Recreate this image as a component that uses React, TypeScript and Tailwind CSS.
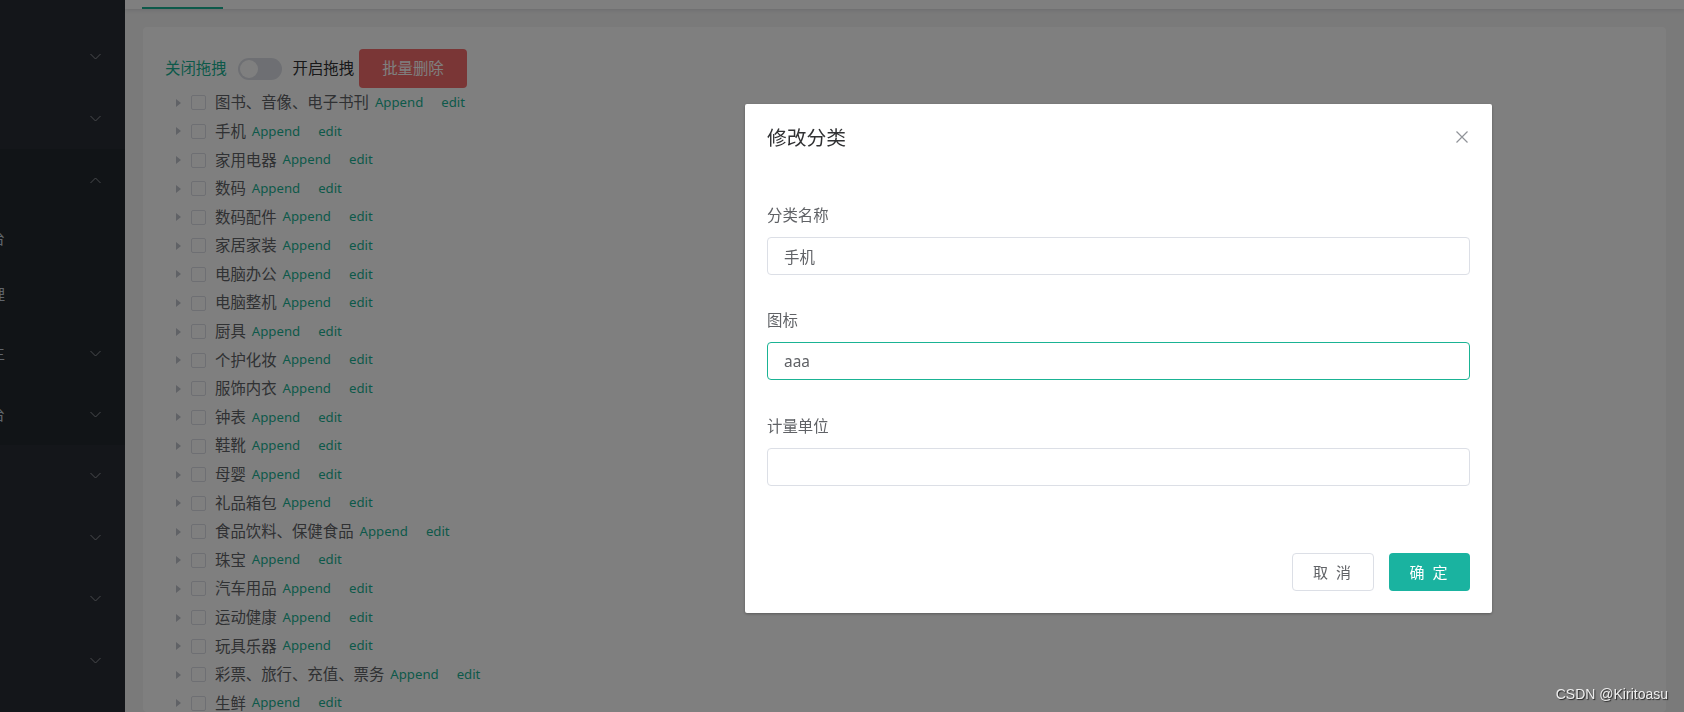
const categories = [
  '图书、音像、电子书刊',
  '手机',
  '家用电器',
  '数码',
  '数码配件',
  '家居家装',
  '电脑办公',
  '电脑整机',
  '厨具',
  '个护化妆',
  '服饰内衣',
  '钟表',
  '鞋靴',
  '母婴',
  '礼品箱包',
  '食品饮料、保健食品',
  '珠宝',
  '汽车用品',
  '运动健康',
  '玩具乐器',
  '彩票、旅行、充值、票务',
  '生鲜',
];

const Chevron = ({ up = false }: { up?: boolean }) => (
  <svg width="11" height="7" viewBox="0 0 11 7" className="shrink-0">
    <path
      d={up ? 'M0.5 6 L5.5 1 L10.5 6' : 'M0.5 1 L5.5 6 L10.5 1'}
      fill="none"
      stroke="#909399"
      strokeWidth="1"
    />
  </svg>
);

// only the tail of each title is visible, the sidebar is cut on the left
const SideRow = ({
  h,
  tail,
  chevron,
}: {
  h: string;
  tail?: string;
  chevron?: 'up' | 'down';
}) => (
  <div className={`${h} flex items-center`}>
    <div className="w-[5px] overflow-hidden flex justify-end whitespace-nowrap text-[15px] text-[#bfcbd9]">
      {tail ?? ''}
    </div>
    <div className="flex-1" />
    {chevron && (
      <div className="w-[11px] mr-[24px] flex">
        <Chevron up={chevron === 'up'} />
      </div>
    )}
  </div>
);

const TreeRow = ({ label }: { label: string }) => (
  <div className="h-[28.6px] flex items-center">
    <div className="w-[26px] flex justify-center">
      <svg width="5" height="8" viewBox="0 0 5 8">
        <path d="M0 0 L5 4 L0 8 Z" fill="#c0c4cc" />
      </svg>
    </div>
    <span className="w-[15px] h-[15px] border border-[#dcdfe6] rounded-[2px] bg-white mr-[9px] shrink-0" />
    <span className="text-[15.4px] text-[#606266]">{label}</span>
    <span className="ml-[6px] text-[13.2px] text-[#1ab394]">Append</span>
    <span className="ml-[18px] text-[13.2px] text-[#1ab394]">edit</span>
  </div>
);

const Field = ({
  label,
  value,
  focused = false,
  className = '',
}: {
  label: string;
  value: string;
  focused?: boolean;
  className?: string;
}) => (
  <div className={className}>
    <div className="h-[21px] leading-[21px] text-[15.4px] text-[#606266] mb-[11px]">
      {label}
    </div>
    <input
      readOnly
      value={value}
      className={`w-full h-[38px] rounded-[4px] border px-[16px] text-[15.4px] text-[#606266] outline-none bg-white ${
        focused ? 'border-[#1ab394]' : 'border-[#dcdfe6]'
      }`}
    />
  </div>
);

const App = () => {
  return (
    <div className="relative flex h-screen w-full overflow-hidden bg-[#f4f4f4] font-['Noto_Sans','Noto_Sans_CJK_SC',sans-serif]">
      <aside className="w-[125px] shrink-0 bg-[#282d34] flex flex-col">
        <div className="h-[25px]" />
        <SideRow h="h-[62px]" chevron="down" />
        <SideRow h="h-[62px]" chevron="down" />
        <div className="bg-[#22282f] flex flex-col">
          <SideRow h="h-[62px]" chevron="up" />
          <SideRow h="h-[55px]" tail="平台" />
          <SideRow h="h-[57px]" tail="管理" />
          <SideRow h="h-[60px]" tail="车主" chevron="down" />
          <SideRow h="h-[62px]" tail="平台" chevron="down" />
        </div>
        <SideRow h="h-[61.5px]" chevron="down" />
        <SideRow h="h-[61.5px]" chevron="down" />
        <SideRow h="h-[61.5px]" chevron="down" />
        <SideRow h="h-[61.5px]" chevron="down" />
      </aside>

      <main className="flex-1 min-w-0 flex flex-col">
        <div className="h-[9px] shrink-0 bg-white shadow-[0_1px_4px_rgba(0,21,41,0.12)] flex items-end">
          <div className="ml-[17px] w-[81px] h-[2px] bg-[#1ab394]" />
        </div>
        <div className="flex-1 min-h-0 pl-[18px] pt-[18px] pr-[18px]">
          <div className="h-full bg-white rounded-[4px] p-[22px]">
            <div className="h-[39.6px] flex items-center">
              <span className="text-[15.4px] text-[#1ab394]">关闭拖拽</span>
              <span className="ml-[11px] w-[44px] h-[22px] rounded-full bg-[#dcdfe6] p-[2px] flex">
                <span className="w-[18px] h-[18px] rounded-full bg-white" />
              </span>
              <span className="ml-[11px] text-[15.4px] text-[#303133]">开启拖拽</span>
              <button
                type="button"
                className="ml-[5px] h-[39px] px-[23px] rounded-[4px] bg-[#f56c6c] text-white text-[15.4px]"
              >
                批量删除
              </button>
            </div>
            <div className="flex flex-col">
              {categories.map((name) => (
                <TreeRow key={name} label={name} />
              ))}
            </div>
          </div>
        </div>
      </main>

      <div className="fixed inset-0 bg-black/50">
        <div className="absolute left-[745px] top-[104px] w-[747px] h-[509px] bg-white rounded-[2px] shadow-[0_1px_3px_rgba(0,0,0,0.3)] flex flex-col px-[22px] pt-[21px] pb-[22px]">
          <div className="h-[26px] flex items-center justify-between">
            <span className="text-[19.8px] leading-[26px] text-[#303133]">修改分类</span>
            <svg width="12" height="12" viewBox="0 0 12 12" className="mr-[2px] -mt-[3px]">
              <path d="M0.5 0.5 L11.5 11.5 M11.5 0.5 L0.5 11.5" stroke="#909399" strokeWidth="1.2" />
            </svg>
          </div>
          <Field label="分类名称" value="手机" className="mt-[54px]" />
          <Field label="图标" value="aaa" focused className="mt-[35px]" />
          <Field label="计量单位" value="" className="mt-[36px]" />
          <div className="mt-auto flex justify-end gap-[15px]">
            <button
              type="button"
              className="h-[38px] w-[82px] rounded-[4px] border border-[#dcdfe6] bg-white text-[15px] text-[#606266] tracking-[2px]"
            >
              取 消
            </button>
            <button
              type="button"
              className="h-[38px] w-[81px] rounded-[4px] bg-[#1ab3a0] text-[15px] text-white tracking-[2px]"
            >
              确 定
            </button>
          </div>
        </div>
      </div>

      <div className="fixed right-[16px] bottom-[7px] text-[14px] text-[#eeeeee] font-['Liberation_Sans',sans-serif] [text-shadow:1px_1px_1px_rgba(0,0,0,0.7)]">
        CSDN @Kiritoasu
      </div>
    </div>
  );
};

export default App;
